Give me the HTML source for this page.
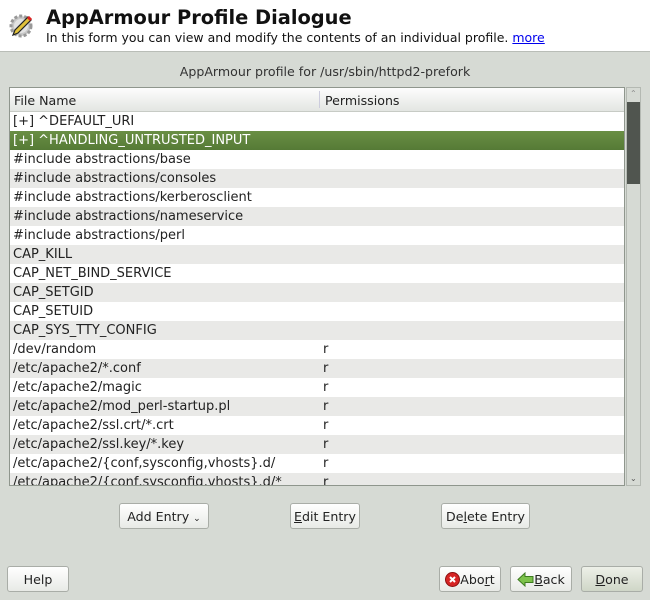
<!DOCTYPE html>
<html><head><style>
*{margin:0;padding:0;box-sizing:border-box}
body{width:650px;height:600px;background:#d6dad4;font-family:"DejaVu Sans","Liberation Sans",sans-serif;font-size:12px;color:#222;position:relative;overflow:hidden}
#hdr{position:absolute;left:0;top:0;width:650px;height:52px;background:#fff;border-bottom:1px solid #b9bdb7}
#title{position:absolute;left:46px;top:6px;font-size:19.4px;font-weight:bold;color:#111}
#sub{position:absolute;left:46px;top:30px;font-size:12.5px;color:#111}
#sub a{color:#0000ee;text-decoration:underline}
#cap{position:absolute;left:0;width:650px;top:64px;text-align:center;font-size:12.6px;color:#333}
#list{position:absolute;left:9px;top:87px;width:616px;height:399px;border:1px solid #8f968d;background:#fff;overflow:hidden}
#th{height:24px;background:linear-gradient(#fdfdfd,#e3e6e2);border-bottom:1px solid #c7cbc5;position:relative;font-size:12.6px}
#th span{position:absolute;top:5px}
#th i{position:absolute;left:309px;top:3px;width:1px;height:17px;background:#ccd}
.r{height:19px;line-height:20px;padding-left:3px;position:relative;white-space:nowrap;font-size:13px}
.r.sel{background:linear-gradient(#6a8f44,#557a36);color:#fff}
.r b{font-weight:normal;position:absolute;left:313px}
#sb{position:absolute;left:626px;top:87px;width:15px;height:399px;background:#d6dad4;border:1px solid #b4b9b2}
#thumb{position:absolute;left:0;top:14px;width:13px;height:82px;background:#50554f}
.btn{position:absolute;height:26px;border:1px solid #a9ada7;border-radius:3px;background:linear-gradient(#fff,#e8eae6);text-align:center;line-height:25px;font-size:12.6px;color:#222}
</style></head><body>
<div id="hdr">
<svg style="position:absolute;left:9px;top:13px" width="25" height="25" viewBox="0 0 25 25">
<circle cx="12" cy="13" r="10" fill="#c8c8c8" stroke="#999" stroke-dasharray="3 2" stroke-width="3"/>
<circle cx="12" cy="13" r="7" fill="#e3e3e3"/>
<path d="M4 22 L6 17 L19 4 L22 7 L9 20 Z" fill="#e2c23a" stroke="#222" stroke-width="1.2"/>
<path d="M19 4 L22 7" stroke="#d22" stroke-width="3"/>
</svg>
<div id="title">AppArmour Profile Dialogue</div>
<div id="sub">In this form you can view and modify the contents of an individual profile. <a>more</a></div>
</div>
<div id="cap">AppArmour profile for /usr/sbin/httpd2-prefork</div>
<div id="list">
<div id="th"><span style="left:4px">File Name</span><i></i><span style="left:315px">Permissions</span></div>
<div>
<div class="r" style="background:#fff">[+] ^DEFAULT_URI</div>
<div class="r sel">[+] ^HANDLING_UNTRUSTED_INPUT</div>
<div class="r" style="background:#fff">#include abstractions/base</div>
<div class="r" style="background:#e9e9e7">#include abstractions/consoles</div>
<div class="r" style="background:#fff">#include abstractions/kerberosclient</div>
<div class="r" style="background:#e9e9e7">#include abstractions/nameservice</div>
<div class="r" style="background:#fff">#include abstractions/perl</div>
<div class="r" style="background:#e9e9e7">CAP_KILL</div>
<div class="r" style="background:#fff">CAP_NET_BIND_SERVICE</div>
<div class="r" style="background:#e9e9e7">CAP_SETGID</div>
<div class="r" style="background:#fff">CAP_SETUID</div>
<div class="r" style="background:#e9e9e7">CAP_SYS_TTY_CONFIG</div>
<div class="r" style="background:#fff">/dev/random<b>r</b></div>
<div class="r" style="background:#e9e9e7">/etc/apache2/*.conf<b>r</b></div>
<div class="r" style="background:#fff">/etc/apache2/magic<b>r</b></div>
<div class="r" style="background:#e9e9e7">/etc/apache2/mod_perl-startup.pl<b>r</b></div>
<div class="r" style="background:#fff">/etc/apache2/ssl.crt/*.crt<b>r</b></div>
<div class="r" style="background:#e9e9e7">/etc/apache2/ssl.key/*.key<b>r</b></div>
<div class="r" style="background:#fff">/etc/apache2/{conf,sysconfig,vhosts}.d/<b>r</b></div>
<div class="r" style="background:#e9e9e7">/etc/apache2/{conf,sysconfig,vhosts}.d/*<b>r</b></div>
</div>
</div>
<div id="sb"><div style="position:absolute;top:1px;left:3px;font-size:8px;color:#888">&#8963;</div><div id="thumb"></div><div style="position:absolute;bottom:2px;left:3px;font-size:8px;color:#555">&#8964;</div></div>
<div class="btn" style="left:119px;top:503px;width:90px">Add Entry <span style="font-size:9px">&#8964;</span></div>
<div class="btn" style="left:290px;top:503px;width:70px"><u>E</u>dit Entry</div>
<div class="btn" style="left:441px;top:503px;width:89px">De<u>l</u>ete Entry</div>
<div class="btn" style="left:7px;top:566px;width:62px">Help</div>
<div class="btn" style="left:439px;top:566px;width:62px"><svg width="15" height="15" viewBox="0 0 15 15" style="vertical-align:-3px"><circle cx="7.5" cy="7.5" r="7" fill="#d62424" stroke="#8a1010"/><path d="M5 5L10 10M10 5L5 10" stroke="#fff" stroke-width="2"/></svg>Abo<u>r</u>t</div>
<div class="btn" style="left:510px;top:566px;width:62px"><svg width="17" height="15" viewBox="0 0 17 15" style="vertical-align:-3px"><path d="M1 7.5L8 1V4.5H16V10.5H8V14Z" fill="#7cc24a" stroke="#3d7a20"/></svg><u>B</u>ack</div>
<div class="btn" style="left:581px;top:566px;width:62px;background:linear-gradient(#edf0e8,#cfd6c7)"><u>D</u>one</div>
</body></html>
